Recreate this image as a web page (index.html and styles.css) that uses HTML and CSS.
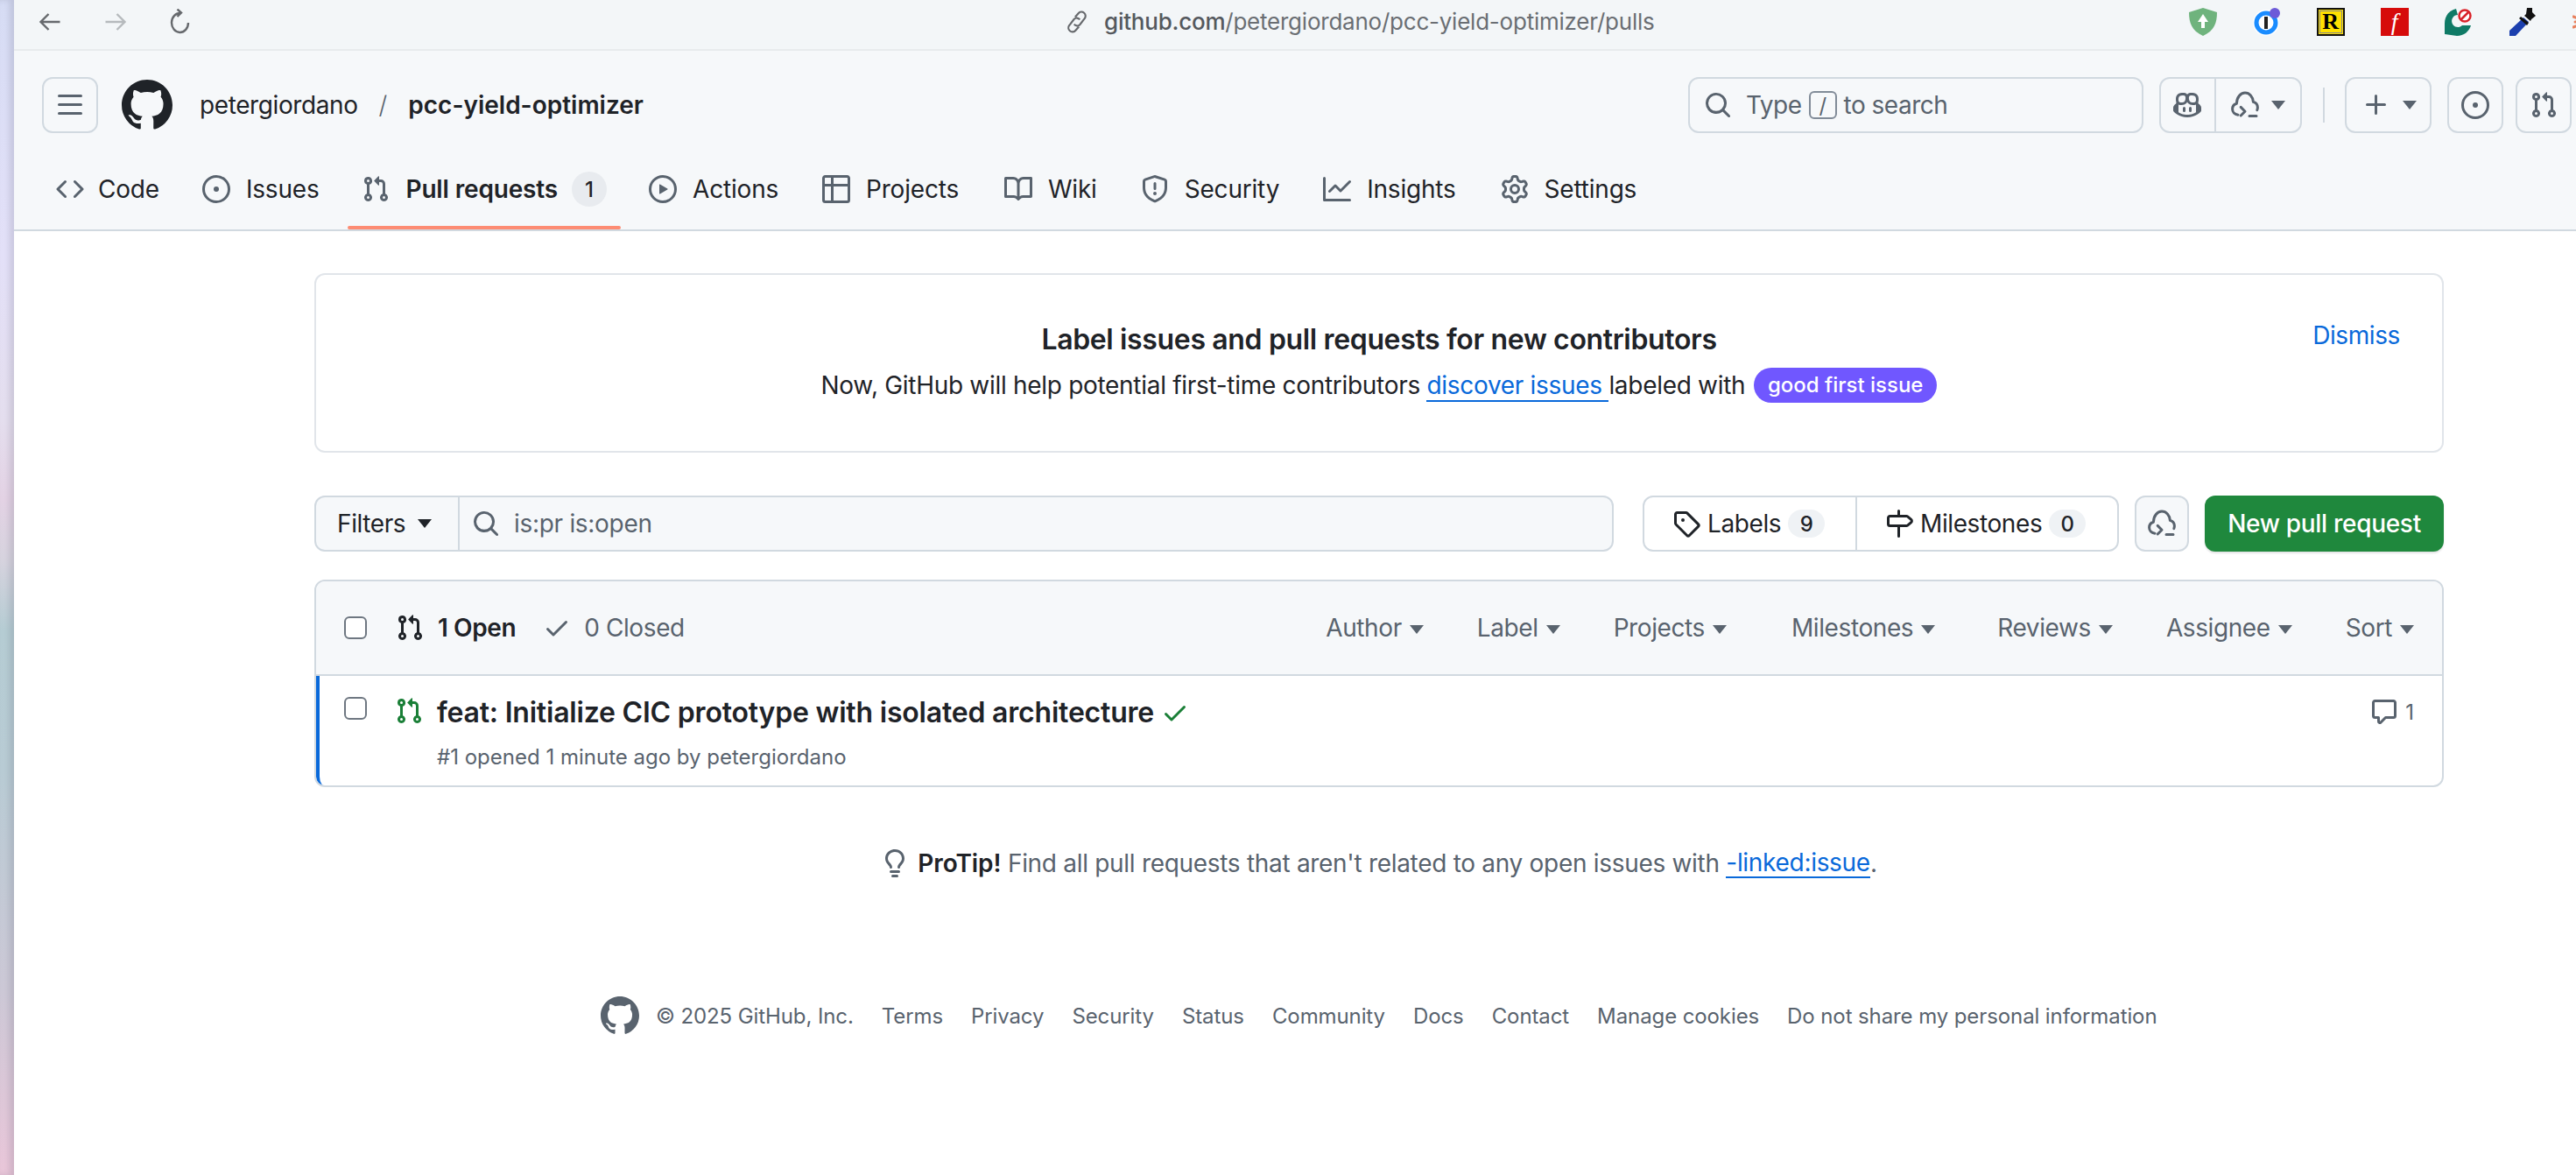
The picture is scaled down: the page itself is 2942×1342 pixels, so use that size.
FILE: index.html
```html
<!DOCTYPE html>
<html lang="en">
<head>
    <meta charset="UTF-8">
    <title>Pull requests · petergiordano/pcc-yield-optimizer</title>
    <link rel="stylesheet" href="styles.css">
</head>
<body>
    <svg class="sprite" xmlns="http://www.w3.org/2000/svg">
        <symbol id="i-mark" viewBox="0 0 16 16"><path d="M8 0c4.42 0 8 3.58 8 8a8.013 8.013 0 0 1-5.45 7.59c-.4.08-.55-.17-.55-.38 0-.27.01-1.13.01-2.2 0-.75-.25-1.23-.54-1.48 1.78-.2 3.65-.88 3.65-3.95 0-.88-.31-1.59-.82-2.15.08-.2.36-1.02-.08-2.12 0 0-.67-.22-2.2.82-.64-.18-1.32-.27-2-.27-.68 0-1.36.09-2 .27-1.53-1.03-2.2-.82-2.2-.82-.44 1.1-.16 1.92-.08 2.12-.51.56-.82 1.28-.82 2.15 0 3.06 1.86 3.75 3.64 3.95-.23.2-.44.55-.51 1.07-.46.21-1.61.55-2.33-.66-.15-.24-.6-.83-1.23-.82-.67.01-.27.38.01.53.34.19.73.9.82 1.13.16.45.68 1.31 2.69.94 0 .67.01 1.3.01 1.49 0 .21-.15.45-.55.38A7.995 7.995 0 0 1 0 8c0-4.42 3.58-8 8-8Z"/></symbol>
        <symbol id="i-bars" viewBox="0 0 16 16"><path d="M1 2.75A.75.75 0 0 1 1.75 2h12.5a.75.75 0 0 1 0 1.5H1.75A.75.75 0 0 1 1 2.75Zm0 5A.75.75 0 0 1 1.75 7h12.5a.75.75 0 0 1 0 1.5H1.75A.75.75 0 0 1 1 7.75ZM1.75 12h12.5a.75.75 0 0 1 0 1.5H1.75a.75.75 0 0 1 0-1.5Z"/></symbol>
        <symbol id="i-code" viewBox="0 0 16 16"><path d="m11.28 3.22 4.25 4.25a.75.75 0 0 1 0 1.06l-4.25 4.25a.749.749 0 0 1-1.275-.326.749.749 0 0 1 .215-.734L13.94 8l-3.72-3.72a.749.749 0 0 1 .326-1.275.749.749 0 0 1 .734.215Zm-6.56 0a.751.751 0 0 1 1.042.018.751.751 0 0 1 .018 1.042L2.06 8l3.72 3.72a.749.749 0 0 1-.326 1.275.749.749 0 0 1-.734-.215L.47 8.53a.75.75 0 0 1 0-1.06Z"/></symbol>
        <symbol id="i-issue" viewBox="0 0 16 16"><path d="M8 9.5a1.5 1.5 0 1 0 0-3 1.5 1.5 0 0 0 0 3Z"/><path d="M8 0a8 8 0 1 1 0 16A8 8 0 0 1 8 0ZM1.5 8a6.5 6.5 0 1 0 13 0 6.5 6.5 0 0 0-13 0Z"/></symbol>
        <symbol id="i-pr" viewBox="0 0 16 16"><path d="M1.5 3.25a2.25 2.25 0 1 1 3 2.122v5.256a2.251 2.251 0 1 1-1.5 0V5.372A2.25 2.25 0 0 1 1.5 3.25Zm5.677-.177L9.573.677A.25.25 0 0 1 10 .854V2.5h1A2.5 2.5 0 0 1 13.5 5v5.628a2.251 2.251 0 1 1-1.5 0V5a1 1 0 0 0-1-1h-1v1.646a.25.25 0 0 1-.427.177L7.177 3.427a.25.25 0 0 1 0-.354ZM3.75 2.5a.75.75 0 1 0 0 1.5.75.75 0 0 0 0-1.5Zm0 9.5a.75.75 0 1 0 0 1.5.75.75 0 0 0 0-1.5Zm8.25.75a.75.75 0 1 0 1.5 0 .75.75 0 0 0-1.5 0Z"/></symbol>
        <symbol id="i-play" viewBox="0 0 16 16"><path d="M8 0a8 8 0 1 1 0 16A8 8 0 0 1 8 0ZM1.5 8a6.5 6.5 0 1 0 13 0 6.5 6.5 0 0 0-13 0Zm4.879-2.773 4.264 2.559a.25.25 0 0 1 0 .428l-4.264 2.559A.25.25 0 0 1 6 10.559V5.442a.25.25 0 0 1 .379-.215Z"/></symbol>
        <symbol id="i-table" viewBox="0 0 16 16"><path d="M0 1.75C0 .784.784 0 1.75 0h12.5C15.216 0 16 .784 16 1.75v12.5A1.75 1.75 0 0 1 14.25 16H1.75A1.75 1.75 0 0 1 0 14.25ZM6.5 6.5v8h7.75a.25.25 0 0 0 .25-.25V6.5Zm8-1.5V1.75a.25.25 0 0 0-.25-.25H6.5V5Zm-13 1.5v7.75c0 .138.112.25.25.25H5v-8ZM5 5V1.5H1.75a.25.25 0 0 0-.25.25V5Z"/></symbol>
        <symbol id="i-book" viewBox="0 0 16 16"><path d="M0 1.75A.75.75 0 0 1 .75 1h4.253c1.227 0 2.317.59 3 1.501A3.743 3.743 0 0 1 11.006 1h4.245a.75.75 0 0 1 .75.75v10.5a.75.75 0 0 1-.75.75h-4.507a2.25 2.25 0 0 0-1.591.659l-.622.621a.75.75 0 0 1-1.06 0l-.622-.621A2.25 2.25 0 0 0 5.258 13H.75a.75.75 0 0 1-.75-.75Zm7.251 10.324.004-5.073-.002-2.253A2.25 2.25 0 0 0 5.003 2.5H1.5v9h3.757a3.75 3.75 0 0 1 1.994.574ZM8.755 4.75l-.004 7.322a3.752 3.752 0 0 1 1.992-.572H14.5v-9h-3.495a2.25 2.25 0 0 0-2.25 2.25Z"/></symbol>
        <symbol id="i-shield" viewBox="0 0 16 16"><path d="M7.467.133a1.748 1.748 0 0 1 1.066 0l5.25 1.68A1.75 1.75 0 0 1 15 3.48V7c0 1.566-.32 3.182-1.303 4.682-.983 1.498-2.585 2.813-5.032 3.855a1.697 1.697 0 0 1-1.33 0c-2.447-1.042-4.049-2.357-5.032-3.855C1.32 10.182 1 8.566 1 7V3.48a1.75 1.75 0 0 1 1.217-1.667Zm.61 1.429a.25.25 0 0 0-.153 0l-5.25 1.68a.25.25 0 0 0-.174.238V7c0 1.358.275 2.666 1.057 3.86.784 1.194 2.121 2.34 4.366 3.297a.196.196 0 0 0 .154 0c2.245-.956 3.582-2.104 4.366-3.298C13.225 9.666 13.5 8.36 13.5 7V3.48a.251.251 0 0 0-.174-.237l-5.25-1.68ZM8.75 4.75v3a.75.75 0 0 1-1.5 0v-3a.75.75 0 0 1 1.5 0ZM9 10.5a1 1 0 1 1-2 0 1 1 0 0 1 2 0Z"/></symbol>
        <symbol id="i-graph" viewBox="0 0 16 16"><path d="M1.5 1.75V13.5h13.75a.75.75 0 0 1 0 1.5H.75a.75.75 0 0 1-.75-.75V1.75a.75.75 0 0 1 1.5 0Zm14.28 2.53-5.25 5.25a.75.75 0 0 1-1.06 0L7 7.06 4.28 9.78a.751.751 0 0 1-1.042-.018.751.751 0 0 1-.018-1.042l3.25-3.25a.75.75 0 0 1 1.06 0L10 7.94l4.72-4.72a.751.751 0 0 1 1.042.018.751.751 0 0 1 .018 1.042Z"/></symbol>
        <symbol id="i-gear" viewBox="0 0 16 16"><path d="M8 0a8.2 8.2 0 0 1 .701.031C9.444.095 9.99.645 10.16 1.29l.288 1.107c.018.066.079.158.212.224.231.114.454.243.668.386.123.082.233.09.299.071l1.103-.303c.644-.176 1.392.021 1.82.63.27.385.506.792.704 1.218.315.675.111 1.422-.364 1.891l-.814.806c-.049.048-.098.147-.088.294.016.257.016.515 0 .772-.01.147.038.246.088.294l.814.806c.475.469.679 1.216.364 1.891a7.977 7.977 0 0 1-.704 1.217c-.428.61-1.176.807-1.82.63l-1.102-.302c-.067-.019-.177-.011-.3.071a5.909 5.909 0 0 1-.668.386c-.133.066-.194.158-.211.224l-.29 1.106c-.168.646-.715 1.196-1.458 1.26a8.006 8.006 0 0 1-1.402 0c-.743-.064-1.289-.614-1.458-1.26l-.289-1.106c-.018-.066-.079-.158-.212-.224a5.738 5.738 0 0 1-.668-.386c-.123-.082-.233-.09-.299-.071l-1.103.303c-.644.176-1.392-.021-1.82-.63a8.12 8.12 0 0 1-.704-1.218c-.315-.675-.111-1.422.363-1.891l.815-.806c.05-.048.098-.147.088-.294a6.214 6.214 0 0 1 0-.772c.01-.147-.038-.246-.088-.294l-.815-.806C.635 6.045.431 5.298.746 4.623a7.92 7.92 0 0 1 .704-1.217c.428-.61 1.176-.807 1.82-.63l1.102.302c.067.019.177.011.3-.071.214-.143.437-.272.668-.386.133-.066.194-.158.211-.224l.29-1.106C6.009.645 6.556.095 7.299.03 7.53.01 7.764 0 8 0Zm-.571 1.525c-.036.003-.108.036-.137.146l-.289 1.105c-.147.561-.549.967-.998 1.189-.173.086-.34.183-.5.29-.417.278-.97.423-1.529.27l-1.103-.303c-.109-.03-.175.016-.195.045-.22.312-.412.644-.573.99-.014.031-.021.11.059.19l.815.806c.411.406.562.957.53 1.456a4.709 4.709 0 0 0 0 .582c.032.499-.119 1.05-.53 1.456l-.815.806c-.081.08-.073.159-.059.19.162.346.353.677.573.989.02.03.085.076.195.046l1.102-.303c.56-.153 1.113-.008 1.53.27.161.107.328.204.501.29.447.222.85.629.997 1.189l.289 1.105c.029.109.101.143.137.146a6.6 6.6 0 0 0 1.142 0c.036-.003.108-.036.137-.146l.289-1.105c.147-.561.549-.967.998-1.189.173-.086.34-.183.5-.29.417-.278.97-.423 1.529-.27l1.103.303c.109.029.175-.016.195-.045.22-.313.411-.644.573-.99.014-.031.021-.11-.059-.19l-.815-.806c-.411-.406-.562-.957-.53-1.456a4.709 4.709 0 0 0 0-.582c-.032-.499.119-1.05.53-1.456l.815-.806c.081-.08.073-.159.059-.19a6.464 6.464 0 0 0-.573-.989c-.02-.03-.085-.076-.195-.046l-1.102.303c-.56.153-1.113.008-1.53-.27a4.44 4.44 0 0 0-.501-.29c-.447-.222-.85-.629-.997-1.189l-.289-1.105c-.029-.11-.101-.143-.137-.146a6.6 6.6 0 0 0-1.142 0ZM11 8a3 3 0 1 1-6 0 3 3 0 0 1 6 0ZM9.5 8a1.5 1.5 0 1 0-3.001.001A1.5 1.5 0 0 0 9.5 8Z"/></symbol>
        <symbol id="i-search" viewBox="0 0 16 16"><path d="M10.68 11.74a6 6 0 0 1-7.922-8.982 6 6 0 0 1 8.982 7.922l3.04 3.04a.749.749 0 0 1-.326 1.275.749.749 0 0 1-.734-.215ZM11.5 7a4.499 4.499 0 1 0-8.997 0A4.499 4.499 0 0 0 11.5 7Z"/></symbol>
        <symbol id="i-copilot" viewBox="0 0 16 16"><path d="M7.998 15.035c-4.562 0-7.873-2.914-7.998-3.749V9.338c.085-.628.677-1.686 1.588-2.065.013-.07.024-.143.036-.218.029-.183.06-.384.126-.612-.201-.508-.254-1.084-.254-1.656 0-.87.128-1.769.693-2.484.579-.733 1.494-1.124 2.724-1.261 1.206-.134 2.262.034 2.944.765.05.053.096.108.139.165.044-.057.094-.112.143-.165.682-.731 1.738-.899 2.944-.765 1.23.137 2.145.528 2.724 1.261.566.715.693 1.614.693 2.484 0 .572-.053 1.148-.254 1.656.066.228.098.429.126.612.012.076.024.148.037.218.924.385 1.522 1.471 1.591 2.095v1.872c0 .766-3.351 3.795-8.002 3.795Zm0-1.485c2.28 0 4.584-1.11 5.002-1.433V7.862l-.023-.116c-.49.21-1.075.291-1.727.291-1.146 0-2.059-.327-2.71-.991A3.222 3.222 0 0 1 8 6.303a3.24 3.24 0 0 1-.544.743c-.65.664-1.563.991-2.71.991-.652 0-1.236-.081-1.727-.291l-.023.116v4.255c.419.323 2.722 1.433 5.002 1.433ZM6.762 2.83c-.193-.206-.637-.413-1.682-.297-1.019.113-1.479.404-1.713.7-.247.312-.369.789-.369 1.554 0 .793.129 1.171.308 1.371.162.181.519.379 1.442.379.853 0 1.339-.235 1.638-.54.315-.322.527-.827.617-1.553.117-.935-.037-1.395-.241-1.614Zm4.155-.297c-1.044-.116-1.488.091-1.681.297-.204.219-.359.679-.242 1.614.091.726.303 1.231.618 1.553.299.305.784.54 1.638.54.922 0 1.28-.198 1.442-.379.179-.2.308-.578.308-1.371 0-.765-.123-1.242-.37-1.554-.233-.296-.693-.587-1.713-.7Z"/><path d="M6.25 9.037a.75.75 0 0 1 .75.75v1.501a.75.75 0 0 1-1.5 0V9.787a.75.75 0 0 1 .75-.75Zm4.25.75v1.501a.75.75 0 0 1-1.5 0V9.787a.75.75 0 0 1 1.5 0Z"/></symbol>
        <symbol id="i-cloud" viewBox="0 0 16 16"><path fill="none" stroke="currentColor" stroke-width="1.5" stroke-linecap="round" stroke-linejoin="round" d="M4 13.6C2 13.4.8 12 .8 10.3c0-1.5 1-2.8 2.4-3.2C3.3 3.6 5.4 1 8 1c2.5 0 4.5 2.2 4.7 5.2 1.5.4 2.5 1.7 2.5 3.2 0 .6-.1 1-.3 1.4M5.6 9.2l2.4 2.4-2.4 2.4M10.5 14.2h4"/></symbol>
        <symbol id="i-plus" viewBox="0 0 16 16"><path d="M7.75 2a.75.75 0 0 1 .75.75V7h4.25a.75.75 0 0 1 0 1.5H8.5v4.25a.75.75 0 0 1-1.5 0V8.5H2.75a.75.75 0 0 1 0-1.5H7V2.75A.75.75 0 0 1 7.75 2Z"/></symbol>
        <symbol id="i-tag" viewBox="0 0 16 16"><path d="M1 7.775V2.75C1 1.784 1.784 1 2.75 1h5.025c.464 0 .91.184 1.238.513l6.25 6.25a1.75 1.75 0 0 1 0 2.474l-5.026 5.026a1.75 1.75 0 0 1-2.474 0l-6.25-6.25A1.752 1.752 0 0 1 1 7.775Zm1.5 0c0 .066.026.13.073.177l6.25 6.25a.25.25 0 0 0 .354 0l5.025-5.025a.25.25 0 0 0 0-.354l-6.25-6.25a.25.25 0 0 0-.177-.073H2.75a.25.25 0 0 0-.25.25ZM6 5a1 1 0 1 1 0 2 1 1 0 0 1 0-2Z"/></symbol>
        <symbol id="i-milestone" viewBox="0 0 16 16"><path d="M7.75 0a.75.75 0 0 1 .75.75V3h3.634c.414 0 .814.147 1.13.414l2.07 1.75a1.75 1.75 0 0 1 0 2.672l-2.07 1.75a1.75 1.75 0 0 1-1.13.414H8.5v5.25a.75.75 0 0 1-1.5 0V10H2.75A1.75 1.75 0 0 1 1 8.25v-3.5C1 3.784 1.784 3 2.75 3H7V.75A.75.75 0 0 1 7.75 0Zm4.384 8.5a.25.25 0 0 0 .161-.06l2.07-1.75a.248.248 0 0 0 0-.38l-2.07-1.75a.25.25 0 0 0-.161-.06H2.75a.25.25 0 0 0-.25.25v3.5c0 .138.112.25.25.25h9.384Z"/></symbol>
        <symbol id="i-check" viewBox="0 0 16 16"><path d="M13.78 4.22a.75.75 0 0 1 0 1.06l-7.25 7.25a.75.75 0 0 1-1.06 0L2.22 9.28a.751.751 0 0 1 .018-1.042.751.751 0 0 1 1.042-.018L6 10.94l6.72-6.72a.75.75 0 0 1 1.06 0Z"/></symbol>
        <symbol id="i-comment" viewBox="0 0 16 16"><path d="M1 2.75C1 1.784 1.784 1 2.75 1h10.5c.966 0 1.75.784 1.75 1.75v7.5A1.75 1.75 0 0 1 13.25 12H9.06l-2.573 2.573A1.458 1.458 0 0 1 4 13.543V12H2.75A1.75 1.75 0 0 1 1 10.25Zm1.75-.25a.25.25 0 0 0-.25.25v7.5c0 .138.112.25.25.25h2a.75.75 0 0 1 .75.75v2.19l2.72-2.72a.749.749 0 0 1 .53-.22h4.5a.25.25 0 0 0 .25-.25v-7.5a.25.25 0 0 0-.25-.25Z"/></symbol>
        <symbol id="i-bulb" viewBox="0 0 16 16"><path d="M8 1.5c-2.363 0-4 1.69-4 3.75 0 .984.424 1.625.984 2.304l.214.253c.223.264.47.556.673.848.284.411.537.896.621 1.49a.75.75 0 0 1-1.484.211c-.04-.282-.163-.547-.37-.847a8.456 8.456 0 0 0-.542-.68c-.084-.1-.173-.205-.268-.32C3.201 7.75 2.5 6.766 2.5 5.25 2.5 2.31 4.863 0 8 0s5.5 2.31 5.5 5.25c0 1.516-.701 2.5-1.328 3.259-.095.115-.184.22-.268.319-.207.245-.383.453-.541.681-.208.3-.33.565-.37.847a.751.751 0 0 1-1.485-.212c.084-.593.337-1.078.621-1.489.203-.292.45-.584.673-.848.075-.088.147-.173.213-.253.561-.679.985-1.32.985-2.304 0-2.06-1.637-3.75-4-3.75ZM5.75 12h4.5a.75.75 0 0 1 0 1.5h-4.5a.75.75 0 0 1 0-1.5ZM6 15.25a.75.75 0 0 1 .75-.75h2.5a.75.75 0 0 1 0 1.5h-2.5a.75.75 0 0 1-.75-.75Z"/></symbol>
    </svg>

    <div class="wallpaper"></div>

    <div class="window">
        <div class="browser-bar">
            <svg class="nav-btn" viewBox="0 0 26 24"><path d="M24 12H3M11 3l-9 9 9 9" /></svg>
            <svg class="nav-btn nav-off" viewBox="0 0 26 24"><path d="M2 12h21M15 3l9 9-9 9" /></svg>
            <svg class="nav-btn nav-reload" viewBox="0 0 26 30"><path d="M22 16a9.5 11 0 1 1-9-11M9.5 .5 14 4.5 9.5 9" /></svg>
            <div class="url">
                <svg class="url-link" viewBox="0 0 24 24"><path d="M10 7l3.5-4a4.2 4.2 0 0 1 6.5 5.5l-5 6.5a4 4 0 0 1-6-.5M14 17l-3.5 4A4.2 4.2 0 0 1 4 15.5l5-6.5a4 4 0 0 1 6 .5" /></svg>
                <span><b>github.com</b>/petergiordano/pcc-yield-optimizer/pulls</span>
            </div>
            <div class="extensions">
                <svg class="ext" viewBox="0 0 32 32"><path fill="#6fb37d" d="M16 0 32 5c0 12-3 21-16 27C3 26 0 17 0 5Z"/><path fill="#fff" d="M16 7l6 9h-4v7h-4v-7h-4Z"/></svg>
                <svg class="ext" viewBox="0 0 32 32"><circle cx="15" cy="17" r="15" fill="#fff"/><circle cx="15" cy="17" r="11" fill="none" stroke="#1a8cff" stroke-width="5"/><rect x="13" y="10" width="4" height="14" fill="#222"/><circle cx="25" cy="6" r="6" fill="#6d5bd8"/></svg>
                <div class="ext ext-r">R</div>
                <div class="ext ext-f">f</div>
                <svg class="ext" viewBox="0 0 32 32"><path fill="#0f7a66" d="M13 1C5 3 0 9 0 18v12l14 2c8 0 14-5 16-12H20a7 7 0 1 1-5-12Z"/><circle cx="23" cy="9" r="8" fill="#fff"/><circle cx="23" cy="9" r="6.5" fill="none" stroke="#d8232a" stroke-width="2.5"/><path d="M19 13l8-8" stroke="#d8232a" stroke-width="2.5"/></svg>
                <svg class="ext" viewBox="0 0 32 32"><path fill="#111" d="M21 0h6v5l4 4-5 4-1 2-7-6 2-2Z"/><path fill="#1b3fae" d="M17 11l6 5L8 32H1l0-6Z"/><path fill="#111" d="M14 10l9 7-2 3-9-8Z"/></svg>
                <svg class="ext" viewBox="0 0 32 32"><g stroke="#e8825f" stroke-width="3" stroke-linecap="round"><path d="M16 16 3 16M16 16 6 5M16 16 6 27M16 16 1 10M16 16 1 22"/></g></svg>
            </div>
        </div>

        <header class="gh-header">
            <div class="top-row">
                <button class="icon-btn"><svg class="icon muted"><use href="#i-bars"/></svg></button>
                <svg class="logo"><use href="#i-mark"/></svg>
                <a class="owner">petergiordano</a>
                <span class="slash">/</span>
                <a class="repo">pcc-yield-optimizer</a>

                <div class="search-box">
                    <svg class="icon muted"><use href="#i-search"/></svg>
                    <span>Type</span><kbd>/</kbd><span>to search</span>
                </div>
                <div class="btn-group">
                    <div class="group-cell"><svg class="icon muted"><use href="#i-copilot"/></svg></div>
                    <div class="group-cell"><svg class="icon muted"><use href="#i-cloud"/></svg><i class="caret"></i></div>
                </div>
                <div class="vline"></div>
                <div class="btn-group plus"><div class="group-cell"><svg class="icon muted"><use href="#i-plus"/></svg><i class="caret"></i></div></div>
                <button class="icon-btn issue-btn"><svg class="icon muted"><use href="#i-issue"/></svg></button>
                <button class="icon-btn pr-btn"><svg class="icon muted"><use href="#i-pr"/></svg></button>
            </div>
            <nav class="tabs">
                <a class="tab"><svg class="icon muted"><use href="#i-code"/></svg>Code</a>
                <a class="tab"><svg class="icon muted"><use href="#i-issue"/></svg>Issues</a>
                <a class="tab active"><svg class="icon muted"><use href="#i-pr"/></svg><span class="tab-label">Pull requests</span><span class="counter">1</span></a>
                <a class="tab"><svg class="icon muted"><use href="#i-play"/></svg>Actions</a>
                <a class="tab"><svg class="icon muted"><use href="#i-table"/></svg>Projects</a>
                <a class="tab"><svg class="icon muted"><use href="#i-book"/></svg>Wiki</a>
                <a class="tab"><svg class="icon muted"><use href="#i-shield"/></svg>Security</a>
                <a class="tab"><svg class="icon muted"><use href="#i-graph"/></svg>Insights</a>
                <a class="tab"><svg class="icon muted"><use href="#i-gear"/></svg>Settings</a>
            </nav>
        </header>

        <main class="content">
            <section class="banner">
                <div></div>
                <div class="banner-body">
                    <h3>Label issues and pull requests for new contributors</h3>
                    <p>Now, GitHub will help potential first-time contributors <a class="link">discover issues </a>labeled with <span class="label-pill">good first issue</span></p>
                </div>
                <a class="dismiss">Dismiss</a>
            </section>

            <div class="filter-row">
                <div class="filter-box">
                    <div class="filters-btn">Filters<i class="caret dark"></i></div>
                    <div class="filter-input"><svg class="icon muted"><use href="#i-search"/></svg>is:pr is:open</div>
                </div>
                <div class="label-group">
                    <div class="label-cell labels"><svg class="icon"><use href="#i-tag"/></svg>Labels<span class="counter light">9</span></div>
                    <div class="label-cell"><svg class="icon"><use href="#i-milestone"/></svg>Milestones<span class="counter light">0</span></div>
                </div>
                <button class="icon-btn cloud-btn"><svg class="icon muted"><use href="#i-cloud"/></svg></button>
                <button class="new-pr">New pull request</button>
            </div>

            <section class="pr-box">
                <div class="pr-head">
                    <span class="checkbox"></span>
                    <svg class="icon pr-state"><use href="#i-pr"/></svg>
                    <span class="open-count">1 Open</span>
                    <svg class="icon muted closed-icon"><use href="#i-check"/></svg>
                    <span class="closed-count">0 Closed</span>
                    <div class="head-filters">
                        <span>Author<i class="caret"></i></span>
                        <span>Label<i class="caret"></i></span>
                        <span class="gap-projects">Projects<i class="caret"></i></span>
                        <span class="gap-milestones">Milestones<i class="caret"></i></span>
                        <span>Reviews<i class="caret"></i></span>
                        <span>Assignee<i class="caret"></i></span>
                        <span>Sort<i class="caret"></i></span>
                    </div>
                </div>
                <div class="pr-row">
                    <span class="checkbox row-check"></span>
                    <svg class="icon green"><use href="#i-pr"/></svg>
                    <div class="pr-main">
                        <div class="pr-title">feat: Initialize CIC prototype with isolated architecture<svg class="icon green"><use href="#i-check"/></svg></div>
                        <div class="pr-meta">#1 opened 1 minute ago by petergiordano</div>
                    </div>
                    <div class="pr-comments"><svg class="icon muted"><use href="#i-comment"/></svg>1</div>
                </div>
            </section>

            <p class="protip"><svg class="icon muted"><use href="#i-bulb"/></svg><b>ProTip!</b> Find all pull requests that aren't related to any open issues with <a class="link">-linked:issue</a>.</p>

            <footer class="site-footer">
                <svg class="footer-logo"><use href="#i-mark"/></svg>
                <span class="copy">© 2025 GitHub, Inc.</span>
                <a>Terms</a><a>Privacy</a><a>Security</a><a>Status</a><a>Community</a><a>Docs</a><a>Contact</a><a>Manage cookies</a><a>Do not share my personal information</a>
            </footer>
        </main>
    </div>
</body>
</html>
```

FILE: styles.css
```css
* { box-sizing: border-box; }
html, body { margin: 0; height: 1342px; overflow: hidden; }
body { display: flex; font-family: Inter, "Liberation Sans", sans-serif; font-size: 28px; color: #1f2328; background: #fff; }
.sprite { display: none; }

.wallpaper { width: 16px; flex: none; box-shadow: inset -5px 0 6px rgba(60, 60, 80, .14); background: linear-gradient(180deg, #d6dcf4 0, #e3e0f8 290px, #e4deee 480px, #e3d2e4 570px, #d6d3de 640px, #b5ccd3 720px, #b8cbd4 880px, #ccc8d6 1130px, #e9c6d9 1342px); }
.window { flex: 1; min-width: 0; overflow: hidden; }

/* browser chrome */
.browser-bar { height: 58px; display: flex; align-items: center; background: #f3f6f8; border-bottom: 2px solid #e8ebed; padding: 0 0 7px 28px; }
.nav-btn { width: 27px; height: 24px; fill: none; stroke: #66696d; stroke-width: 2.4; margin-right: 47px; flex: none; }
.nav-reload { width: 28px; height: 30px; margin-right: 0; }
.nav-off { stroke: #b6babd; }
.url { display: flex; align-items: center; margin-left: 997px; font-size: 26px; color: #6a6e73; white-space: nowrap; letter-spacing: -.23px; }
.url b { font-weight: 500; color: #55595e; }
.url-link { width: 26px; height: 26px; margin-right: 18px; fill: none; stroke: #66696d; stroke-width: 2; }
.extensions { display: flex; align-items: center; gap: 41px; margin-left: 610px; flex: none; }
.ext { width: 32px; height: 32px; flex: none; }
.ext-r { background: #ffe000; border: 2px solid #111; outline: 1px solid #888; outline-offset: -4px; font: 700 26px/28px "Liberation Serif", serif; color: #000; text-align: center; }
.ext-f { background: #d60b0b; color: #fff; font: italic 28px/32px "Liberation Serif", serif; text-align: center; }

/* github header */
.gh-header { height: 206px; background: #f6f8fa; border-bottom: 2px solid #d1d9e0; padding: 30px 5px 0 32px; }
.top-row { display: flex; align-items: center; height: 64px; }
.icon { width: 32px; height: 32px; fill: currentColor; flex: none; color: #1f2328; }
.icon.muted { color: #59636e; }
.icon.green { color: #1a7f37; }
.icon-btn { width: 64px; height: 64px; flex: none; display: flex; align-items: center; justify-content: center; padding: 0; background: #f6f8fa; border: 2px solid #d1d9e0; border-radius: 12px; }
.logo { width: 58px; height: 58px; margin-left: 27px; fill: #1f2328; flex: none; }
.owner { margin-left: 31px; letter-spacing: -.4px; }
.slash { margin: 0 24px; color: #59636e; font-weight: 300; }
.repo { font-weight: 600; }

.search-box { width: 520px; height: 64px; margin-left: auto; display: flex; align-items: center; padding-left: 16px; color: #59636e; border: 2px solid #d1d9e0; border-radius: 12px; white-space: nowrap; letter-spacing: -.5px; }
.search-box span:first-of-type { margin-left: 16px; }
kbd { width: 32px; height: 32px; margin: 0 8px; display: flex; align-items: center; justify-content: center; font: inherit; font-size: 24px; border: 2px solid #818b98; border-radius: 6px; }
.btn-group { height: 64px; display: flex; margin-left: 18px; border: 2px solid #d1d9e0; border-radius: 12px; }
.group-cell { height: 100%; display: flex; align-items: center; padding: 0 15px 0 14px; }
.group-cell + .group-cell { border-left: 2px solid #d1d9e0; padding: 0 17px 0 17px; }
.caret { display: inline-block; width: 0; height: 0; margin-left: 14px; border-style: solid; border-width: 10px 8px 0; border-color: #59636e transparent transparent; }
.caret.dark { border-color: #1f2328 transparent transparent; }
.vline { width: 2px; height: 40px; margin-left: 24px; background: #d1d9e0; }
.btn-group.plus { margin-left: 23px; }
.btn-group.plus .group-cell { padding: 0 15px 0 18px; }
.issue-btn { margin-left: 18px; }
.pr-btn { margin-left: 14px; }

.tabs { display: flex; margin-top: 34px; height: 76px; }
.tab { height: 76px; display: flex; align-items: center; gap: 18px; padding: 0 16px 16px; margin-right: 18px; position: relative; white-space: nowrap; letter-spacing: -.2px; }
.tab:first-child { gap: 16px; }
.tab:nth-child(-n+2) { margin-right: 17px; }
.tab:nth-child(5) { margin-right: 20px; }
.tab:nth-child(8) { margin-right: 19px; }
.tab.active { font-weight: 600; letter-spacing: -.15px; margin-right: 16px; }
.tab.active::after { content: ""; position: absolute; left: 0; right: 0; bottom: 0; height: 4px; background: #fd8c73; border-radius: 4px; }
.counter { min-width: 40px; height: 40px; display: flex; align-items: center; justify-content: center; font-size: 24px; font-weight: 500; letter-spacing: 0; background: #e8ebef; border-radius: 20px; margin-left: -2px; }
.counter.light { min-width: 42px; height: 32px; background: #eff2f5; margin-left: 0; }

/* page content */
.content { padding: 48px 151px 0 343px; }
.banner { height: 205px; display: grid; grid-template-columns: 1fr auto 1fr; border: 2px solid #e1e5ea; border-radius: 12px; padding: 0 48px; }
.banner-body { text-align: center; padding-top: 54px; }
.banner h3 { margin: 0; font-size: 32px; line-height: 40px; font-weight: 600; letter-spacing: -.35px; }
.banner p { margin: 12px 0 0; line-height: 40px; letter-spacing: -.3px; white-space: nowrap; }
.link { color: #0969da; border-bottom: 2px solid #0969da; }
.label-pill { display: inline-block; height: 40px; padding: 0 16px; margin-left: 2px; line-height: 40px; font-size: 24px; font-weight: 500; color: #fff; background: #7057ff; border-radius: 20px; letter-spacing: 0; vertical-align: top; }
.dismiss { justify-self: end; margin-top: 52px; color: #0969da; letter-spacing: -.4px; }

.filter-row { display: flex; margin-top: 49px; height: 64px; }
.filter-box { flex: 1; display: flex; background: #f6f8fa; border: 2px solid #d1d9e0; border-radius: 12px; }
.filters-btn { width: 164px; display: flex; align-items: center; padding-left: 24px; border-right: 2px solid #d1d9e0; letter-spacing: -.4px; }
.filter-input { display: flex; align-items: center; gap: 16px; padding-left: 14px; color: #59636e; letter-spacing: -.3px; }
.label-group { width: 544px; margin-left: 33px; display: flex; border: 2px solid #d1d9e0; border-radius: 12px; }
.label-cell { display: flex; align-items: center; gap: 8px; padding: 0 30px 0 32px; letter-spacing: -.4px; white-space: nowrap; }
.label-cell.labels { width: 243px; border-right: 2px solid #d1d9e0; }
.cloud-btn { margin-left: 18px; width: 62px; }
.new-pr { width: 273px; margin-left: 18px; font: 500 28px Inter, sans-serif; letter-spacing: -.3px; color: #fff; background: #1f883d; border: none; border-radius: 12px; box-shadow: 0 2px 2px rgba(31, 35, 40, .12); }

.pr-box { margin-top: 32px; height: 237px; border: 2px solid #d1d9e0; border-radius: 12px; overflow: hidden; }
.pr-head { height: 108px; display: flex; align-items: center; padding: 0 32px; background: #f6f8fa; border-bottom: 2px solid #d1d9e0; letter-spacing: -.4px; }
.checkbox { width: 26px; height: 26px; flex: none; border: 2px solid #6e7781; border-radius: 6px; background: #fff; }
.pr-state { margin-left: 33px; }
.open-count { margin-left: 16px; font-weight: 600; }
.closed-icon { margin-left: 31px; }
.closed-count { margin-left: 15px; color: #59636e; }
.head-filters { margin-left: auto; display: flex; gap: 61px; color: #59636e; white-space: nowrap; }
.head-filters .caret { margin-left: 9px; vertical-align: 3px; }
.gap-projects { margin-right: 13px; }
.gap-milestones { margin-right: 10px; }
.pr-row { height: 127px; display: flex; align-items: flex-start; padding: 22px 32px 0 28px; border-left: 4px solid #0969da; border-bottom-left-radius: 12px; }
.row-check { margin-top: 2px; }
.pr-row > .icon { margin: 2px 0 0 32px; }
.pr-main { margin-left: 16px; }
.pr-title { display: flex; align-items: center; gap: 8px; font-size: 32px; line-height: 40px; font-weight: 600; letter-spacing: -.2px; }
.pr-meta { margin-top: 15px; font-size: 24px; line-height: 32px; color: #59636e; }
.pr-comments { margin: 3px 0 0 auto; display: flex; align-items: center; gap: 8px; color: #59636e; height: 32px; font-size: 24px; }

.protip { display: flex; align-items: center; justify-content: center; margin: 70px 0 0; line-height: 32px; color: #59636e; letter-spacing: -.3px; white-space: pre; }
.protip .icon { margin-right: 10px; }
.protip b { font-weight: 600; color: #1f2328; letter-spacing: -.1px; }

.site-footer { display: flex; align-items: center; height: 44px; margin-top: 135px; padding-left: 327px; font-size: 24px; color: #59636e; white-space: nowrap; letter-spacing: -.1px; gap: 32px; }
.footer-logo { width: 44px; height: 44px; fill: #59636e; flex: none; margin-right: -13px; }
```
